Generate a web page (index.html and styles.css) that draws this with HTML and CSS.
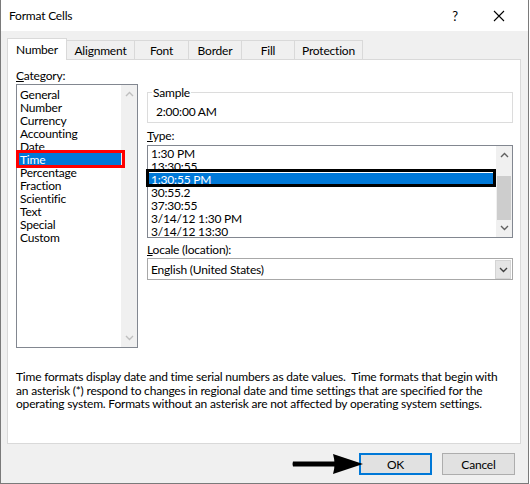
FILE: index.html
```html
<!DOCTYPE html>
<html lang="en">
<head>
  <meta charset="UTF-8">
  <title>Format Cells</title>
  <link rel="stylesheet" href="styles.css">
</head>
<body>
  <div class="window">
    <div class="titlebar">
      <span class="title">Format Cells</span>
      <span class="help">?</span>
      <svg class="close" width="12" height="12" viewBox="0 0 12 12">
        <path d="M1 1L11 11M11 1L1 11" stroke="#000" stroke-width="1.1" fill="none"/>
      </svg>
    </div>

    <div class="dialog">
      <div class="tabs">
        <div class="tab active">Number</div>
        <div class="tab tab-alignment">Alignment</div>
        <div class="tab tab-font">Font</div>
        <div class="tab tab-border">Border</div>
        <div class="tab tab-fill">Fill</div>
        <div class="tab tab-protection">Protection</div>
      </div>

      <div class="panel">
        <div class="columns">
          <!-- category list -->
          <div class="left">
            <div class="label"><u>C</u>ategory:</div>
            <div class="listbox category">
              <ul class="items">
                <li>General</li>
                <li>Number</li>
                <li>Currency</li>
                <li>Accounting</li>
                <li>Date</li>
                <li class="selected mark-red">Time</li>
                <li>Percentage</li>
                <li>Fraction</li>
                <li>Scientific</li>
                <li>Text</li>
                <li>Special</li>
                <li>Custom</li>
              </ul>
              <div class="scrollbar disabled">
                <div class="arrow"><svg width="9" height="6" viewBox="0 0 9 6"><path d="M1 5L4.5 1.5L8 5" /></svg></div>
                <div class="track"></div>
                <div class="arrow"><svg width="9" height="6" viewBox="0 0 9 6"><path d="M1 1L4.5 4.5L8 1" /></svg></div>
              </div>
            </div>
          </div>

          <!-- sample / type / locale -->
          <div class="right">
            <fieldset class="sample">
              <legend>Sample</legend>
              <div class="sample-value">2:00:00 AM</div>
            </fieldset>

            <div class="label type-label"><u>T</u>ype:</div>
            <div class="listbox type">
              <ul class="items">
                <li>1:30 PM</li>
                <li>13:30:55</li>
                <li class="selected mark-black">1:30:55 PM</li>
                <li>30:55.2</li>
                <li>37:30:55</li>
                <li>3/14/12 1:30 PM</li>
                <li>3/14/12 13:30</li>
              </ul>
              <div class="scrollbar">
                <div class="arrow"><svg width="9" height="6" viewBox="0 0 9 6"><path d="M1 5L4.5 1.5L8 5" /></svg></div>
                <div class="track"><div class="thumb"></div></div>
                <div class="arrow"><svg width="9" height="6" viewBox="0 0 9 6"><path d="M1 1L4.5 4.5L8 1" /></svg></div>
              </div>
            </div>

            <div class="label locale-label"><u>L</u>ocale (location):</div>
            <div class="combo">
              <span class="combo-text">English (United States)</span>
              <div class="combo-btn"><svg width="9" height="6" viewBox="0 0 9 6"><path d="M1 1L4.5 4.5L8 1" /></svg></div>
            </div>
          </div>
        </div>

        <p class="description">Time formats display date and time serial numbers as date values.&nbsp; Time formats that begin with<br>an asterisk (*) respond to changes in regional date and time settings that are specified for the<br>operating system. Formats without an asterisk are not affected by operating system settings.</p>
      </div>

      <div class="buttons">
        <svg class="pointer" width="76" height="26" viewBox="0 0 76 26">
          <path d="M6 10.5Q5 13 6 15.5L48 15.5L48 10.5Z" fill="#000"/>
          <path d="M46 3Q49 13 46 23L76 13Z" fill="#000"/>
        </svg>
        <button class="btn default">OK</button>
        <button class="btn">Cancel</button>
      </div>
    </div>
  </div>
</body>
</html>
```

FILE: styles.css
```css
body {
  margin: 0;
  background-color: #fff;
  font-family: Lato, 'Noto Sans', sans-serif;
  font-size: 12px;
  letter-spacing: -0.2px;
  color: #000;
}
.window {
  width: 529px;
  height: 484px;
  box-sizing: border-box;
  border: 1px solid #7a7a7a;
  border-top: none;
  display: flex;
  flex-direction: column;
  background-color: #f0f0f0;
}
.titlebar {
  height: 31px;
  flex: none;
  background-color: #fff;
  display: flex;
  align-items: center;
  padding-left: 8px;
}
.title {
  font-size: 12px;
}
.help {
  margin-left: auto;
  width: 8px;
  text-align: center;
  margin-right: 34px;
  font-size: 13px;
}
.close {
  margin-right: 23px;
}
.dialog {
  flex: 1;
  padding: 7px 7px 0 6px;
}
.tabs {
  display: flex;
  align-items: flex-end;
}
.tab {
  box-sizing: border-box;
  height: 19px;
  padding-top: 2px;
  line-height: 15px;
  text-align: center;
  border: 1px solid #d9d9d9;
  border-left: none;
  border-bottom: none;
  background-color: #f0f0f0;
}
.tab.active {
  position: relative;
  z-index: 1;
  width: 60px;
  height: 22px;
  padding-top: 3px;
  margin-bottom: -1px;
  border-left: 1px solid #d9d9d9;
  background-color: #fff;
}
.tab-alignment { width: 68px; }
.tab-font { width: 54px; }
.tab-border { width: 53px; }
.tab-fill { width: 53px; }
.tab-protection { width: 68px; }
.panel {
  box-sizing: border-box;
  height: 385px;
  background-color: #fff;
  border: 1px solid #d9d9d9;
  padding: 8px 6px 0 8px;
}
.columns {
  display: grid;
  grid-template-columns: 122px 366px;
  column-gap: 9px;
}
.label {
  line-height: 15px;
}
.label u {
  text-underline-offset: 1px;
}
.listbox {
  box-sizing: border-box;
  display: flex;
  border: 1px solid #828790;
  background-color: #fff;
}
.listbox.category {
  margin-top: 1px;
  height: 264px;
}
.items {
  flex: 1;
  list-style: none;
  margin: 0;
  padding: 3px 0 0;
  position: relative;
}
.items li {
  line-height: 13px;
  height: 13px;
  padding-left: 3px;
  white-space: nowrap;
}
.items li.selected {
  position: relative;
  background-color: #0078d7;
  color: #fff;
}
.mark-red::after {
  content: '';
  position: absolute;
  z-index: 2;
  left: -1px;
  right: -4px;
  top: -3px;
  bottom: -2px;
  border: 3px solid #f00;
}
.mark-black::after {
  content: '';
  position: absolute;
  z-index: 2;
  left: -2px;
  right: 0;
  top: -4px;
  bottom: -1px;
  border: 3px solid #000;
}
.scrollbar {
  width: 16px;
  flex: none;
  display: flex;
  flex-direction: column;
  background-color: #f0f0f0;
}
.scrollbar .arrow {
  height: 18px;
  display: flex;
  align-items: center;
  justify-content: center;
}
.scrollbar svg path,
.combo-btn svg path {
  fill: none;
  stroke: #606060;
  stroke-width: 1.4;
}
.scrollbar.disabled svg path {
  stroke: #bfbfbf;
}
.scrollbar .track {
  flex: 1;
}
.thumb {
  margin: 12px 1px 0;
  height: 44px;
  background-color: #cdcdcd;
}
.sample {
  margin: 17px 0 0;
  padding: 5px 8px 3px;
  border: 1px solid #dcdcdc;
  min-width: 0;
}
.sample legend {
  margin-left: -4px;
  padding: 0 1px;
  line-height: 15px;
}
.sample-value {
  line-height: 14px;
}
.type-label {
  margin-top: 5px;
}
.listbox.type {
  margin-top: 2px;
  height: 93px;
}
.listbox.type .items {
  padding-top: 1px;
}
.locale-label {
  margin-top: 4px;
}
.combo {
  box-sizing: border-box;
  margin-top: 1px;
  height: 22px;
  display: flex;
  align-items: center;
  border: 1px solid #a8a8a8;
  background-color: #fff;
}
.combo-text {
  flex: 1;
  padding-left: 3px;
}
.combo-btn {
  box-sizing: border-box;
  width: 16px;
  height: 19px;
  margin-top: 1px;
  margin-right: 1px;
  display: flex;
  align-items: center;
  justify-content: center;
  background-color: #e5e5e5;
  border: 1px solid #d4d4d4;
}
.combo-btn svg path {
  stroke: #404040;
}
.description {
  margin: 22px 0 0;
  line-height: 13.5px;
  white-space: nowrap;
}
.buttons {
  display: flex;
  justify-content: flex-end;
  align-items: flex-start;
  gap: 10px;
  margin-top: 9px;
  padding-right: 6px;
}
.pointer {
  margin-top: -2px;
  margin-right: -14px;
  position: relative;
  z-index: 1;
}
.btn {
  width: 73px;
  height: 22px;
  box-sizing: border-box;
  font-family: inherit;
  font-size: 12px;
  letter-spacing: -0.2px;
  color: #000;
  background-color: #e1e1e1;
  border: 1px solid #adadad;
  padding: 0;
}
.btn.default {
  border: 2px solid #0078d7;
}
```
